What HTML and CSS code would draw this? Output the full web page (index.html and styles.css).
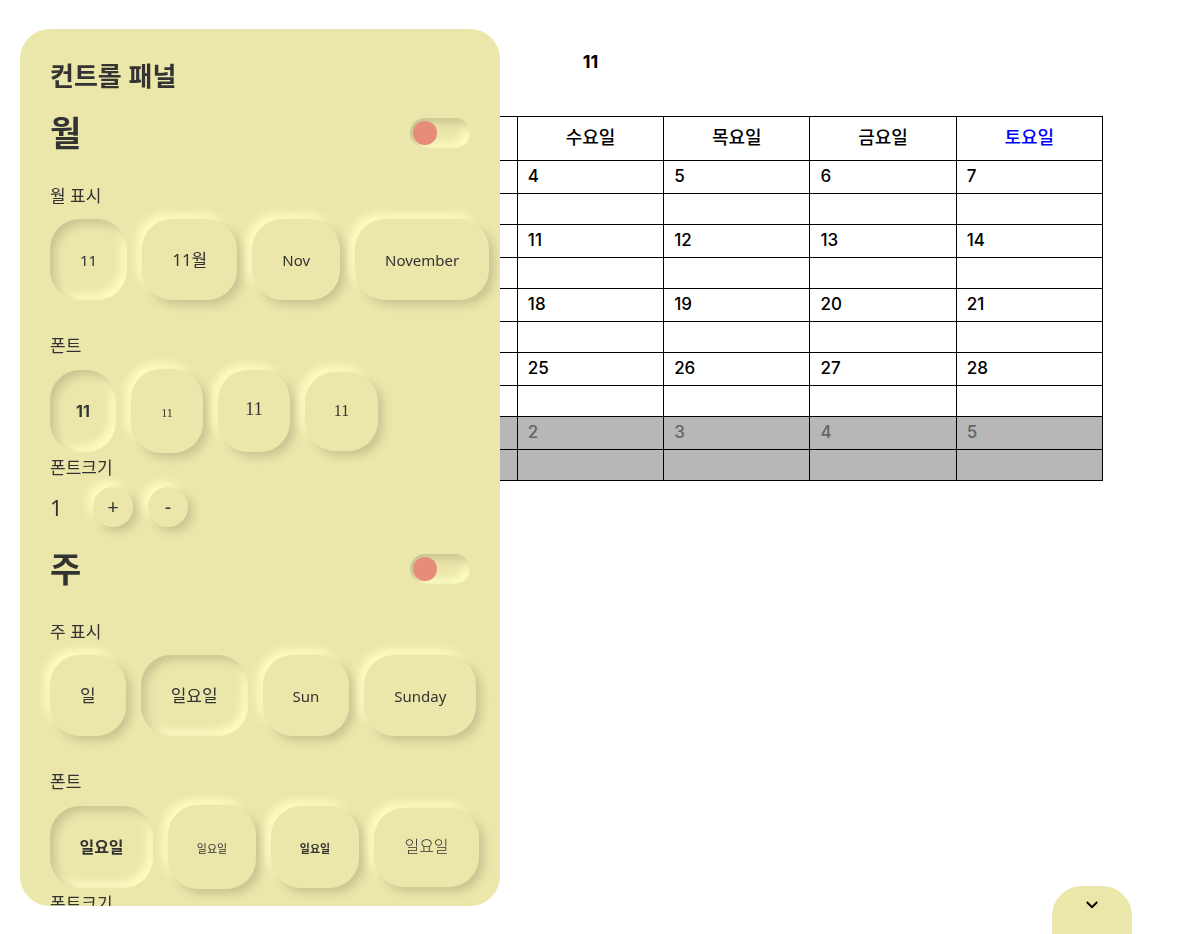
FILE: index.html
```html
<!DOCTYPE html>
<html lang="ko">
<head>
<meta charset="utf-8">
<meta name="viewport" content="width=device-width, initial-scale=1">
<title>달력</title>
<link rel="stylesheet" href="styles.css">
</head>
<body>
<main class="calendar">
  <h1 class="calendar-title">11</h1>
  <table class="calendar-table">
    <thead>
      <tr><th class="sunday">일요일</th><th>월요일</th><th>화요일</th><th>수요일</th><th>목요일</th><th>금요일</th><th class="saturday">토요일</th></tr>
    </thead>
    <tbody>
      <tr class="dates"><td>1</td><td>2</td><td>3</td><td>4</td><td>5</td><td>6</td><td>7</td></tr>
      <tr class="notes"><td></td><td></td><td></td><td></td><td></td><td></td><td></td></tr>
      <tr class="dates"><td>8</td><td>9</td><td>10</td><td>11</td><td>12</td><td>13</td><td>14</td></tr>
      <tr class="notes"><td></td><td></td><td></td><td></td><td></td><td></td><td></td></tr>
      <tr class="dates"><td>15</td><td>16</td><td>17</td><td>18</td><td>19</td><td>20</td><td>21</td></tr>
      <tr class="notes"><td></td><td></td><td></td><td></td><td></td><td></td><td></td></tr>
      <tr class="dates"><td>22</td><td>23</td><td>24</td><td>25</td><td>26</td><td>27</td><td>28</td></tr>
      <tr class="notes"><td></td><td></td><td></td><td></td><td></td><td></td><td></td></tr>
      <tr class="dates"><td>29</td><td>30</td><td class="outside">1</td><td class="outside">2</td><td class="outside">3</td><td class="outside">4</td><td class="outside">5</td></tr>
      <tr class="notes"><td></td><td></td><td class="outside"></td><td class="outside"></td><td class="outside"></td><td class="outside"></td><td class="outside"></td></tr>
    </tbody>
  </table>
</main>

<aside class="panel">
  <h2 class="panel-title">컨트롤 패널</h2>

  <section class="group month">
    <div class="group-head">
      <h3 class="group-title" id="month-title">월</h3>
      <input class="switch" type="checkbox" aria-labelledby="month-title">
    </div>
    <h4 class="label">월 표시</h4>
    <div class="options formats">
      <button class="option active" type="button">11</button>
      <button class="option hangul" type="button">11월</button>
      <button class="option" type="button">Nov</button>
      <button class="option" type="button">November</button>
    </div>
    <h4 class="label">폰트</h4>
    <div class="options fonts">
      <button class="option font-pen active" type="button">11</button>
      <button class="option font-small" type="button">11</button>
      <button class="option font-tall" type="button">11</button>
      <button class="option font-myeongjo" type="button">11</button>
    </div>
    <h4 class="label">폰트크기</h4>
    <div class="size">
      <span class="size-value">1</span>
      <button class="round" type="button" aria-label="크게">+</button>
      <button class="round" type="button" aria-label="작게">-</button>
    </div>
  </section>

  <section class="group week">
    <div class="group-head">
      <h3 class="group-title" id="week-title">주</h3>
      <input class="switch" type="checkbox" aria-labelledby="week-title">
    </div>
    <h4 class="label">주 표시</h4>
    <div class="options formats">
      <button class="option hangul" type="button">일</button>
      <button class="option hangul active" type="button">일요일</button>
      <button class="option" type="button">Sun</button>
      <button class="option" type="button">Sunday</button>
    </div>
    <h4 class="label">폰트</h4>
    <div class="options fonts">
      <button class="option font-pen active" type="button">일요일</button>
      <button class="option font-small" type="button">일요일</button>
      <button class="option font-tall" type="button">일요일</button>
      <button class="option font-myeongjo" type="button">일요일</button>
    </div>
    <h4 class="label">폰트크기</h4>
  </section>
</aside>

<button class="drawer" type="button" aria-label="열기">
  <svg width="14" height="10" viewBox="0 0 14 10" fill="none" stroke="#000" stroke-width="2"><path d="M1.8 2 7 7.2 12.2 2"/></svg>
</button>
</body>
</html>
```
FILE: styles.css
```css
:root {
  --base: #ebe7aa;
  --dark: #c8c491;
  --light: #ffffc4;
  --ink: #333;
}

* { box-sizing: border-box; }

body {
  margin: 0;
  background: #fff;
  color: #000;
  font-family: "Noto Sans", "Noto Sans CJK KR", sans-serif;
}

h1, h2, h3, h4 { margin: 0; }

.calendar { padding: 46px 77px 0 78px; }

.calendar-title {
  margin-bottom: 38px;
  font-family: "Liberation Sans Narrow", Inter, sans-serif;
  font-size: 18px;
  line-height: 32px;
  text-align: center;
}

.calendar-table {
  width: 100%;
  table-layout: fixed;
  border-collapse: collapse;
  font-family: Inter, "Noto Sans CJK KR", sans-serif;
}

.calendar-table th,
.calendar-table td {
  padding: 0 10px 2px;
  border: 1px solid #000;
}

.calendar-table th {
  height: 44px;
  font-size: 18px;
  line-height: 24px;
  font-weight: 500;
}

.calendar-table .sunday { color: #f00; }
.calendar-table .saturday { color: #00f; }

.dates td {
  height: 33px;
  font-size: 17px;
  line-height: 24px;
  font-weight: 500;
  text-align: left;
}

.notes td { height: 31px; }

.calendar-table .outside {
  background: #b7b7b7;
  color: #666;
}

.panel {
  position: fixed;
  top: 29px;
  bottom: 28px;
  left: 20px;
  width: 480px;
  padding: 29px 30px 0;
  overflow: hidden;
  border-radius: 30px;
  background: var(--base);
  color: var(--ink);
}

.panel-title {
  margin-bottom: 15px;
  font-size: 26px;
  line-height: 36px;
}

.group { margin-bottom: 18px; }

.group-head {
  display: flex;
  align-items: center;
  justify-content: space-between;
  margin-bottom: 27px;
}

.group-title {
  font-size: 34px;
  line-height: 48px;
}

.switch {
  width: 60px;
  height: 30px;
  margin: 0;
  padding: 3px;
  appearance: none;
  border-radius: 15px;
  background: var(--base);
  box-shadow: inset 5px 5px 10px var(--dark), inset -5px -5px 10px var(--light);
}

.switch::before {
  content: "";
  display: block;
  width: 24px;
  height: 24px;
  border-radius: 50%;
  background: #e68c78;
}

.label {
  font-size: 17px;
  line-height: 24px;
  font-weight: 400;
}

.options {
  display: flex;
  align-items: center;
  gap: 15px;
}

.formats { margin: 11px 0 34px; }

.fonts {
  height: 84px;
  margin: 11px 0 3px;
}

.option,
.round {
  flex: none;
  border: 0;
  background: var(--base);
  color: var(--ink);
  font-family: inherit;
  box-shadow: 5px 5px 10px var(--dark), -5px -5px 10px var(--light);
}

.option {
  height: 81px;
  padding: 0 30px;
  border-radius: 30px;
  font-size: 15px;
  line-height: 24px;
}

.option.active {
  box-shadow: inset 5px 5px 10px var(--dark), inset -5px -5px 10px var(--light);
}

.option.hangul { font-size: 17px; }

.fonts .option { padding: 0; }

.fonts .font-pen {
  width: 66px;
  height: 82px;
  font-family: "Liberation Sans Narrow", Inter, "Noto Sans CJK KR", sans-serif;
  font-size: 16px;
  font-weight: 700;
}

.fonts .font-small {
  width: 72px;
  height: 84px;
  padding-top: 4px;
  font-family: "Liberation Serif", "Noto Sans CJK KR", serif;
  font-size: 12px;
}

.fonts .font-tall {
  width: 72px;
  height: 82px;
  padding-bottom: 4px;
  font-family: "Liberation Sans Narrow", "Liberation Serif", "Noto Sans CJK KR", serif;
  font-size: 18px;
}

.fonts .font-myeongjo {
  width: 73px;
  height: 79px;
  font-family: "Liberation Serif", "Noto Sans CJK KR", serif;
  font-size: 16px;
  font-weight: 300;
}

.week .font-pen { width: 103px; }

.week .font-small {
  width: 88px;
  font-size: 11px;
}

.week .font-tall {
  width: 88px;
  padding: 4px 0 0;
  font-size: 11px;
  font-weight: 700;
}

.week .font-myeongjo { width: 105px; }

.size {
  display: flex;
  align-items: center;
  gap: 15px;
  margin-top: 7px;
}

.size-value {
  width: 28px;
  font-size: 22px;
  line-height: 40px;
}

.round {
  width: 40px;
  height: 40px;
  padding: 0;
  border-radius: 50%;
  font-size: 20px;
  line-height: 24px;
}

.drawer {
  position: fixed;
  right: 48px;
  bottom: 0;
  display: flex;
  justify-content: center;
  width: 80px;
  height: 48px;
  padding: 14px 0 0;
  border: 0;
  border-radius: 30px 30px 0 0;
  background: var(--base);
}
```
